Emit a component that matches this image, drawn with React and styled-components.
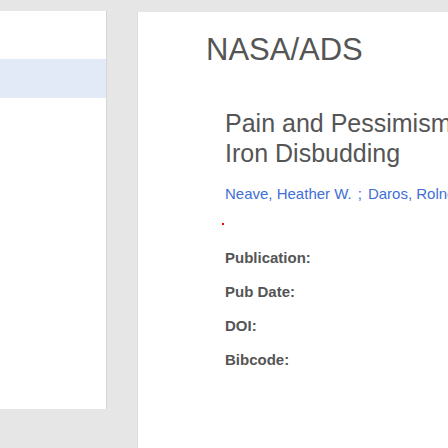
import React from "react";
import styled, { createGlobalStyle } from "styled-components";

const Global = createGlobalStyle`
  html, body { margin: 0; padding: 0; }
  body {
    background: #e6e6e6;
    font-family: "Liberation Sans", Arial, sans-serif;
    overflow: hidden;
  }
`;

const Page = styled.div`
  display: flex;
  align-items: flex-start;
  padding-top: 11px;
  width: 448px;
  height: 437px;
  overflow: hidden;
`;

const Sidebar = styled.aside`
  flex: 0 0 107px;
  height: 398px;
  background: #ffffff;
  border-right: 1px solid #d6d6d6;
  padding-top: 48px;
  box-sizing: border-box;
`;

const SideItem = styled.div`
  height: 39px;
  background: ${(p) => (p.$active ? "#e2eaf7" : "transparent")};
`;

const Main = styled.main`
  margin-left: 31px;
  margin-top: 1px;
  flex: 1;
  min-width: 0;
  height: 436px;
  background: #ffffff;
  box-shadow: -1px 0 0 #dcdcdc;
  padding: 20px 0 0 68px;
  box-sizing: border-box;
  overflow: hidden;
  white-space: nowrap;
  color: #555555;
`;

const Brand = styled.h1`
  margin: 0;
  font-size: 31px;
  line-height: 36px;
  font-weight: 400;
  color: #555555;
`;

const Article = styled.section`
  padding-left: 19px;
  margin-top: 39.5px;
`;

const Title = styled.h2`
  margin: 0;
  font-size: 25px;
  line-height: 30px;
  font-weight: 400;
  color: #555555;
`;

const Authors = styled.div`
  margin-top: 16px;
  font-size: 15px;
  line-height: 20px;
  color: #3f6fd6;
`;

const AuthorLink = styled.a`
  color: #3f6fd6;
  text-decoration: none;
`;

const Separator = styled.span`
  margin: 0 6px;
`;

const Marker = styled.div`
  width: 2px;
  height: 2px;
  background: #ff0000;
  margin: 19px 0 0 -3px;
`;

const Fields = styled.dl`
  margin: 16.5px 0 0 0;
`;

const FieldLabel = styled.dt`
  font-size: 15px;
  line-height: 34px;
  font-weight: 700;
  color: #555555;
`;

export default function App() {
  return (
    <>
      <Global />
      <Page>
        <Sidebar>
          <SideItem $active />
        </Sidebar>
        <Main>
          <Brand>NASA/ADS</Brand>
          <Article>
            <Title>
              Pain and Pessimism in Dairy Calves Following Hot-
              <br />
              Iron Disbudding
            </Title>
            <Authors>
              <AuthorLink href="#">Neave, Heather W.</AuthorLink>
              <Separator>;</Separator>
              <AuthorLink href="#">Daros, Rolnei R.</AuthorLink>
            </Authors>
            <Marker />
            <Fields>
              <FieldLabel>Publication:</FieldLabel>
              <FieldLabel>Pub Date:</FieldLabel>
              <FieldLabel>DOI:</FieldLabel>
              <FieldLabel>Bibcode:</FieldLabel>
            </Fields>
          </Article>
        </Main>
      </Page>
    </>
  );
}
